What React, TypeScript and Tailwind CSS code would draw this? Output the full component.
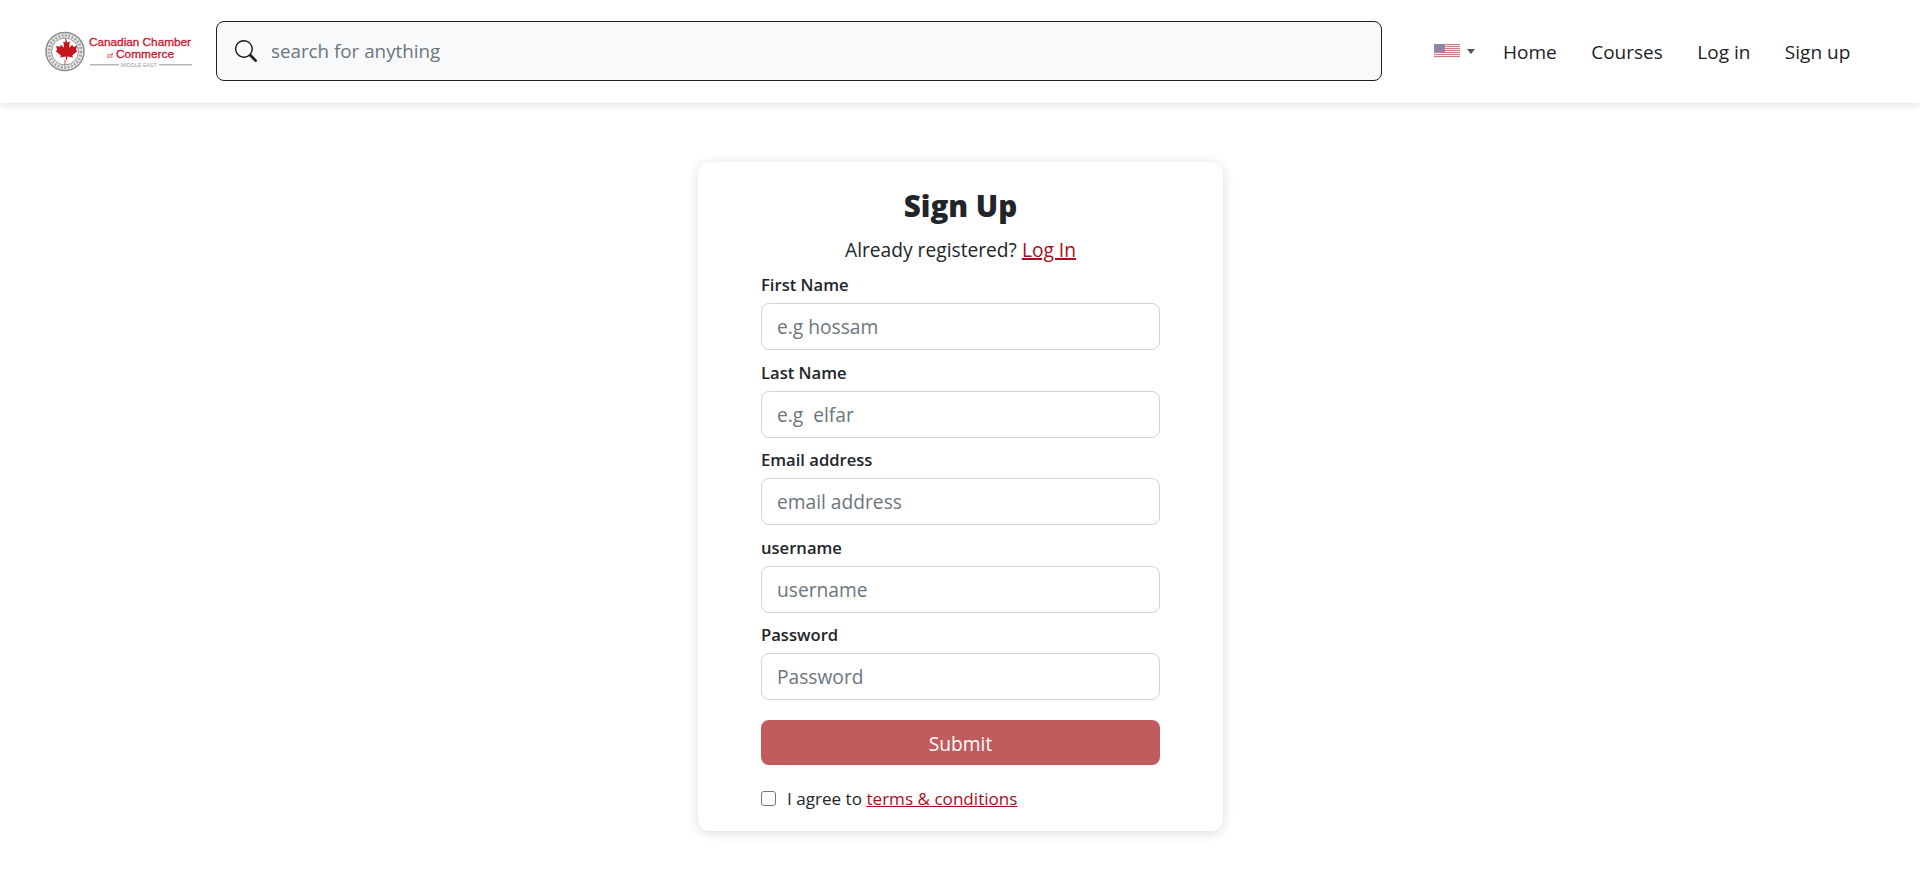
import React from "react";

function Logo() {
  return (
    <svg width="147" height="42" viewBox="0 0 147 42" className="block">
      <circle cx="20" cy="20.500" r="19" fill="#efefef" stroke="#8a8a8a" strokeWidth="1.500" />
      <circle cx="20" cy="20.500" r="16" fill="none" stroke="#a5a5a5" strokeWidth="3" strokeDasharray="2 1.400" />
      <circle cx="20" cy="20.500" r="13.500" fill="#fff" stroke="#777" strokeWidth="0.800" />
      <path
        d="M20 6.500l2.600 5 2.200-1-.7 6.200 3.200-3 .8 2 4-.7-1.200 4 1.600 1-5.200 4.400.6 2-5.600-.8-.3 3.600h-.9l-.3-3.600-5.600.8.6-2-5.200-4.400 1.600-1-1.200-4 4 .7.8-2 3.200 3-.7-6.200 2.200 1z"
        fill="#c8141e"
      />
      <rect x="19.600" y="29" width="0.800" height="5" fill="#c8141e" />
      <text x="44" y="15" fontFamily="'Liberation Sans',sans-serif" fontSize="11" fontWeight="400" stroke="#c9162b" strokeWidth="0.300" fill="#c9162b" textLength="102" lengthAdjust="spacingAndGlyphs">Canadian Chamber</text>
      <text x="62" y="27" fontFamily="'Liberation Sans',sans-serif" fontSize="7" fill="#c9162b">of</text>
      <text x="71" y="27" fontFamily="'Liberation Sans',sans-serif" fontSize="11" fontWeight="400" stroke="#c9162b" strokeWidth="0.300" fill="#c9162b" textLength="58" lengthAdjust="spacingAndGlyphs">Commerce</text>
      <rect x="45" y="33" width="29" height="1.500" fill="#b5b5b5" />
      <rect x="114" y="33" width="33" height="1.500" fill="#b5b5b5" />
      <text x="76" y="36" fontFamily="'Liberation Sans',sans-serif" fontSize="5.500" fill="#a0a0a0" textLength="36" lengthAdjust="spacingAndGlyphs">MIDDLE EAST</text>
    </svg>
  );
}

function Flag() {
  const stripes = [0, 2, 4, 6, 8, 10, 12];
  return (
    <svg width="26" height="15" viewBox="0 0 26 15" className="block opacity-60">
      <rect width="26" height="15" fill="#fff" />
      {stripes.map((y) => (
        <rect key={y} x="0" y={y} width="26" height="1.150" fill="#b22234" />
      ))}
      <rect width="11" height="8" fill="#3c3b6e" />
    </svg>
  );
}

function Field({ label, placeholder }: { label: string; placeholder: string }) {
  return (
    <div className="mb-[8.500px]">
      <label className="mb-[6px] block pt-[2px] text-[16.600px] leading-6 font-[550] text-[#212529]">{label}</label>
      <input
        placeholder={placeholder}
        className="block h-[47px] w-full rounded-lg border border-[#ced4da] bg-white px-[15px] text-[19.200px] leading-[27px] text-[#212529] outline-none placeholder:text-[#6c757d]"
      />
    </div>
  );
}

export default function App() {
  return (
    <div className="min-h-[883px] bg-white font-['Open_Sans','Noto_Sans',sans-serif] text-[#212529]">
      <header className="flex h-[103px] items-center bg-white pr-[48px] pl-[45px] shadow-[0_2px_8px_rgba(0,0,0,0.12)]">
        <Logo />
        <div className="mb-[2px] ml-6 flex h-[60px] w-[1166px] items-center rounded-lg border border-[#1c1d1f] bg-[#f8f9fa] pl-[18px]">
          <svg width="22" height="22" viewBox="0 0 16 16" fill="#1c1d1f" className="shrink-0">
            <path d="M11.742 10.344a6.500 6.500 0 1 0-1.397 1.398h-.001q.044.060.098.115l3.850 3.850a1 1 0 0 0 1.415-1.414l-3.850-3.850a1 1 0 0 0-.115-.1zM12 6.500a5.500 5.500 0 1 1-11 0 5.500 5.500 0 0 1 11 0" />
          </svg>
          <input
            placeholder="search for anything"
            className="ml-[14px] w-full bg-transparent pt-[2px] text-[18.800px] text-[#212529] outline-none placeholder:text-[#6c757d]"
          />
        </div>
        <div className="ml-[52px] flex items-center">
          <Flag />
          <span className="mb-[1px] ml-[7px] h-0 w-0 border-x-[4px] border-t-[5px] border-x-transparent border-t-[#555]" />
        </div>
        <nav className="ml-[28px] flex items-center gap-[34.500px] pt-[2px] text-[19px] text-[#1c1d1f]">
          <a>Home</a>
          <a>Courses</a>
          <a>Log in</a>
          <a>Sign up</a>
        </nav>
      </header>
      <main className="flex justify-center pt-[59px] pl-[1px]">
        <div className="h-[669px] w-[525px] rounded-xl bg-white px-[63px] pt-[26px] shadow-[0_2px_12px_rgba(0,0,0,0.14)]">
          <h1 className="text-center text-[29.600px] leading-[36px] font-black text-[#212529]">Sign Up</h1>
          <p className="mt-[11px] text-center text-[19.200px] leading-[29px] text-[#212529]">
            Already registered? <a className="text-[#a50f1c] underline decoration-2">Log In</a>
          </p>
          <div className="mt-[7px]">
            <Field label="First Name" placeholder="e.g hossam" />
            <Field label="Last Name" placeholder="e.g  elfar" />
            <Field label="Email address" placeholder="email address" />
            <Field label="username" placeholder="username" />
            <Field label="Password" placeholder="Password" />
          </div>
          <button className="mt-[20px] block h-[45px] w-full rounded-lg bg-[#c15c5e] pt-[3px] text-[19.200px] text-white">Submit</button>
          <label className="mt-[21px] flex items-center text-[17.100px] font-medium text-[#212529]">
            <input type="checkbox" className="m-0 h-[15px] w-[15px] appearance-none rounded-[3px] border border-[#767676] bg-white" />
            <span className="ml-[11px]">
              I agree to <a className="text-[#a50f1c] underline">terms &amp; conditions</a>
            </span>
          </label>
        </div>
      </main>
    </div>
  );
}
